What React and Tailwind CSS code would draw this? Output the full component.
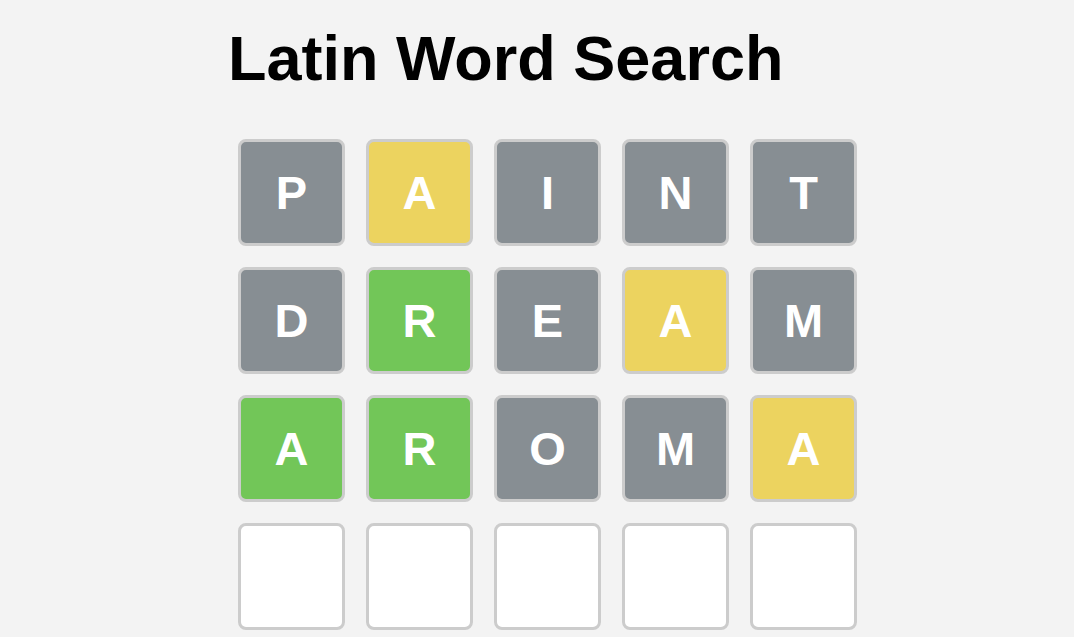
import React from 'react';

const rows = [
  [['P', 'gray'], ['A', 'yellow'], ['I', 'gray'], ['N', 'gray'], ['T', 'gray']],
  [['D', 'gray'], ['R', 'green'], ['E', 'gray'], ['A', 'yellow'], ['M', 'gray']],
  [['A', 'green'], ['R', 'green'], ['O', 'gray'], ['M', 'gray'], ['A', 'yellow']],
  [['', 'empty'], ['', 'empty'], ['', 'empty'], ['', 'empty'], ['', 'empty']],
];

const tileColors = {
  gray: 'bg-[#878e93]',
  yellow: 'bg-[#ecd35f]',
  green: 'bg-[#72c658]',
  empty: 'bg-white',
};

const Tile = ({ letter, state }) => (
  <div
    className={`w-[107px] h-[107px] rounded-[8px] border-[3px] border-[#cccccc] flex items-center justify-center text-white font-bold text-[47px] leading-none ${tileColors[state]}`}
  >
    {letter}
  </div>
);

export default function App() {
  return (
    <div
      className="min-h-screen bg-[#f3f3f3] overflow-hidden"
      style={{ fontFamily: '"Liberation Sans", Arial, sans-serif' }}
    >
      <div className="pl-[228px] pt-[19px]">
        <h1 className="text-[63px] font-bold leading-[78px] text-black">Latin Word Search</h1>
        <div className="mt-[42px] ml-[10px] flex flex-col gap-[21px]">
          {rows.map((row, i) => (
            <div key={i} className="flex gap-[21px]">
              {row.map(([letter, state], j) => (
                <Tile key={j} letter={letter} state={state} />
              ))}
            </div>
          ))}
        </div>
      </div>
    </div>
  );
}
